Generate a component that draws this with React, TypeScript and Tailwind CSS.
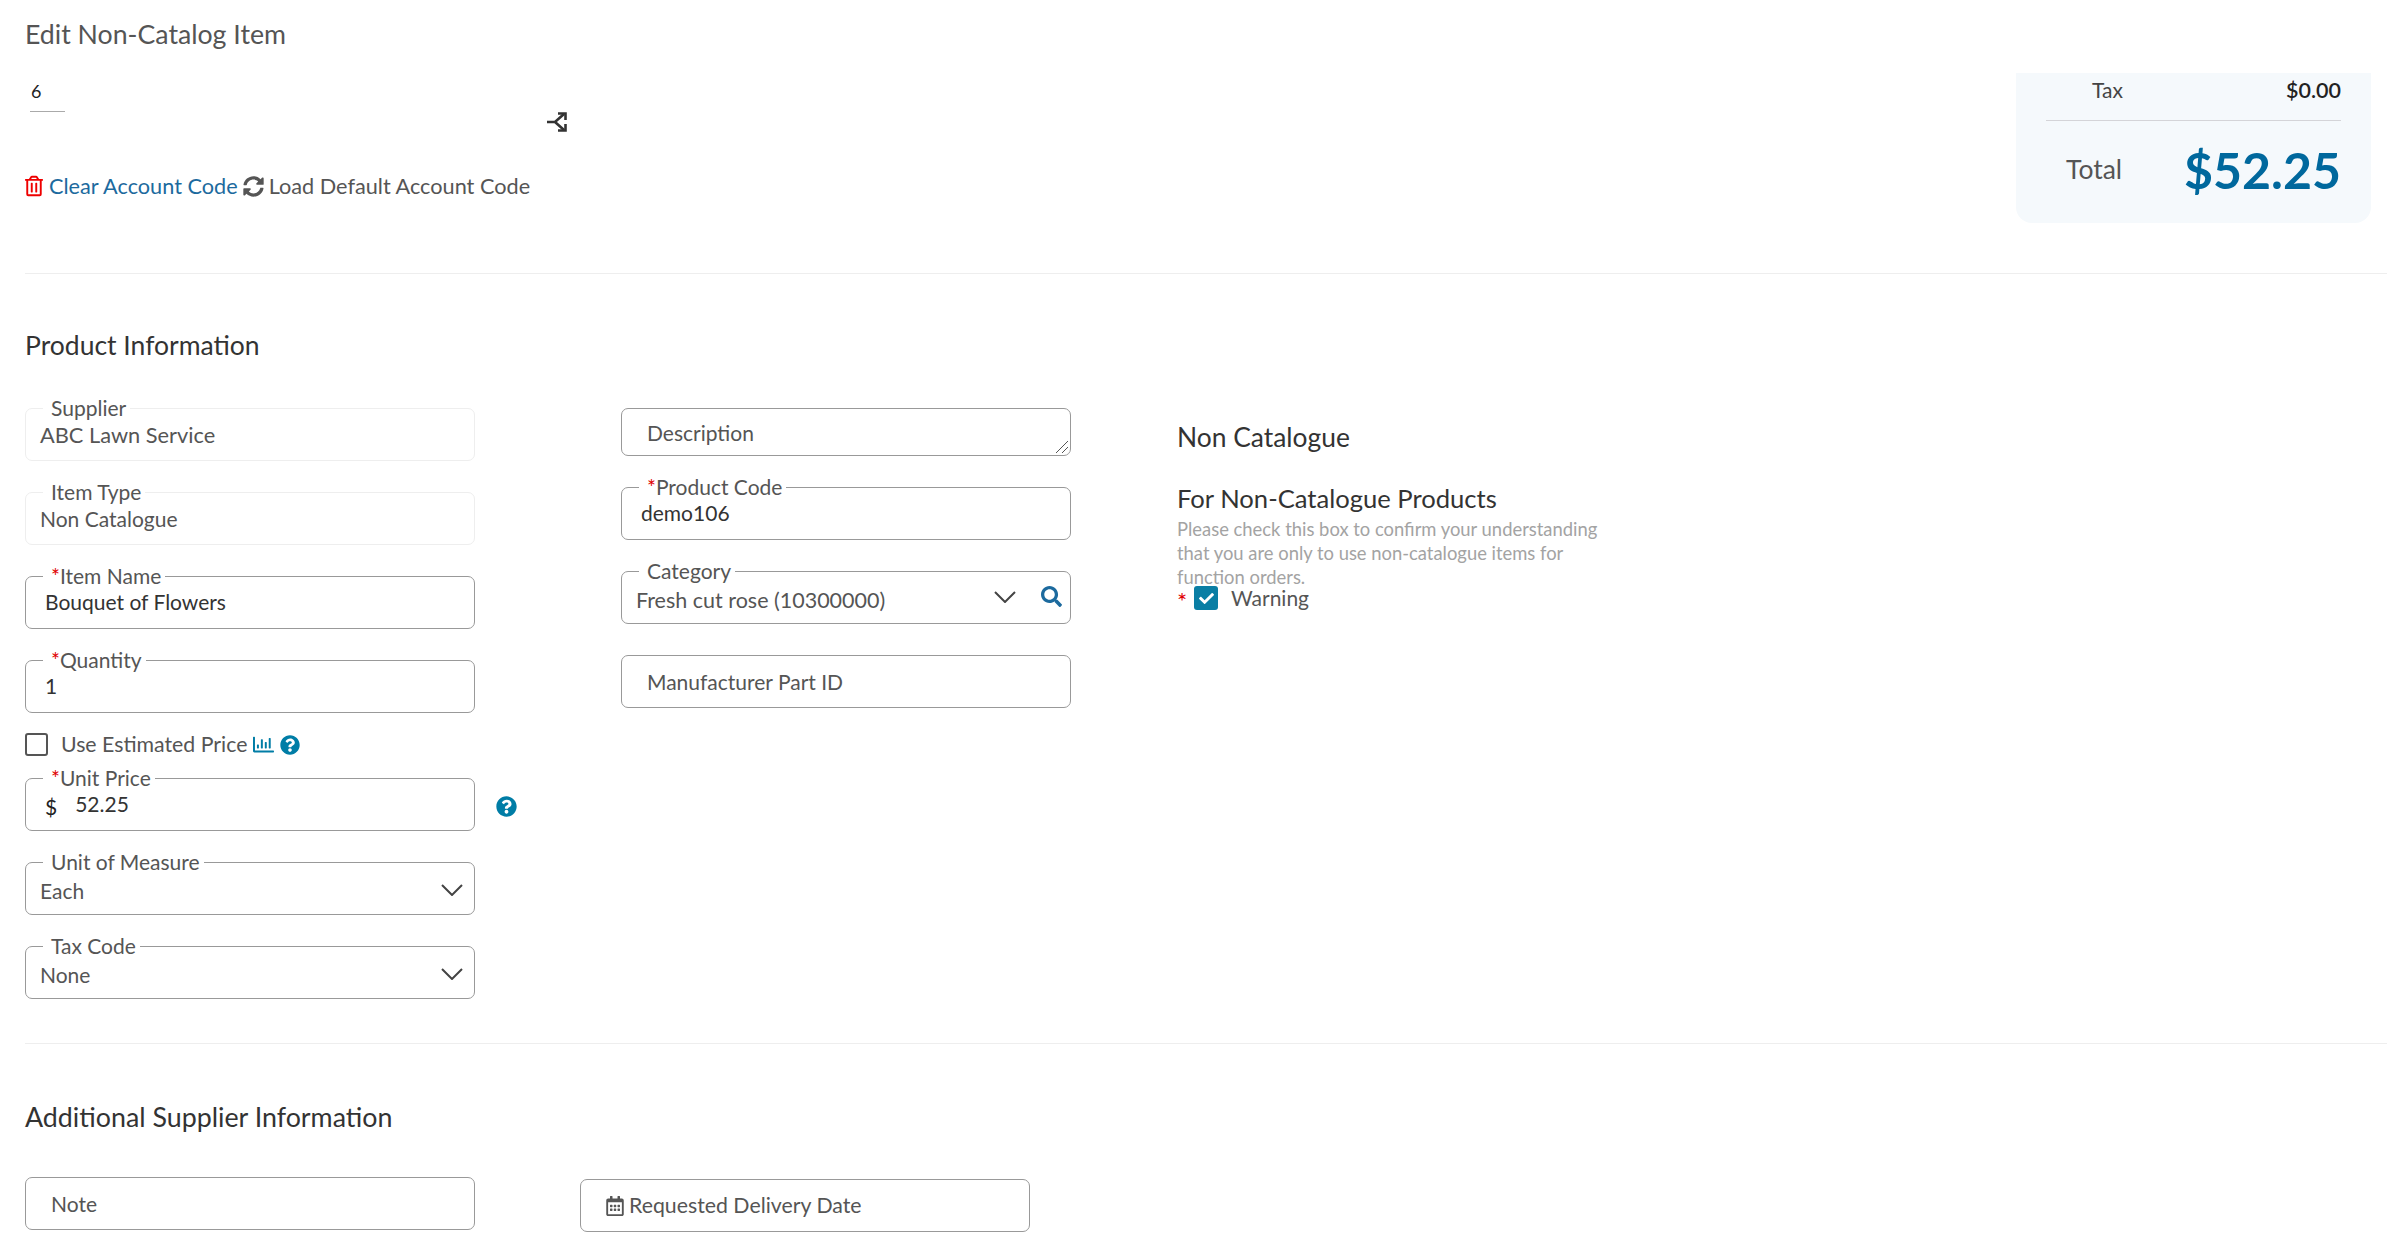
import { ReactNode } from 'react';
import {
    FaCheck,
    FaQuestionCircle,
    FaRegCalendarAlt,
    FaRegChartBar,
    FaRegTrashAlt,
    FaSearch,
    FaSyncAlt,
} from 'react-icons/fa';

function Field({ label, required, muted, children }: { label: string; required?: boolean; muted?: boolean; children: ReactNode }) {
    return (
        <fieldset className={`w-[450px] h-[65px] pb-[12px] border rounded-[7px] flex items-center leading-[28px] ${muted ? 'border-[#eeeeee]' : 'border-[#999999]'}`}>
            <legend className="ml-[17px] pl-[8px] pr-[4px] h-[24px] leading-[23px] text-[#555555]">
                {required && <span className="text-[#e00000]">*</span>}
                {label}
            </legend>
            {children}
        </fieldset>
    );
}

function Chevron() {
    return (
        <svg className="w-[22px] h-[12px] shrink-0" viewBox="0 0 22 12" fill="none" stroke="#444444" strokeWidth="2">
            <path d="M1 1l10 10L21 1" />
        </svg>
    );
}

function SelectValue({ text }: { text: string }) {
    return (
        <div className="w-full pl-[14px] pr-[11px] flex items-center justify-between text-[#555555]">
            <span className="mt-[3px]">{text}</span>
            <Chevron />
        </div>
    );
}

function PlainBox({ children }: { children: ReactNode }) {
    return <div className="w-[450px] h-[53px] border border-[#999999] rounded-[7px] flex items-center pl-[25px] text-[#555555]">{children}</div>;
}

export default function App() {
    return (
        <div className="w-[2387px] h-[1243px] overflow-hidden bg-white text-[21px] font-['Lato',sans-serif] text-[#333333]">
            <div className="pl-[25px] pt-[18px]">
                <h1 className="text-[26.7px] leading-[32px] text-[#555555]">Edit Non-Catalog Item</h1>

                {/* top row */}
                <div className="flex justify-between items-start h-[200px] mt-[23px] pr-[16px]">
                    <div className="w-[542px]">
                        <div className="ml-[5px] w-[35px] h-[39px] border-b border-[#aaaaaa] pl-[1px] pt-[6px] text-[18px] leading-[24px] text-[#222222]">6</div>
                        <div className="flex justify-end">
                            <svg className="w-[20px] h-[20px]" viewBox="0 0 20 20" fill="none" stroke="#333333" strokeWidth="2.6">
                                <path d="M0 10h8l9-8M8 10l9 8" />
                                <path d="M11 1.5h7.5V8M18.5 12v6.5H11" />
                            </svg>
                        </div>
                        <div className="flex items-center mt-[40px] leading-[28px] text-[21.7px] whitespace-nowrap">
                            <FaRegTrashAlt className="w-[18px] h-[22px] text-[#ee0000] shrink-0" />
                            <span className="ml-[6px] text-[#1c6a9e]">Clear Account Code</span>
                            <FaSyncAlt className="ml-[5px] w-[21px] h-[21px] text-[#555555] shrink-0" />
                            <span className="ml-[5px] text-[#555555]">Load Default Account Code</span>
                        </div>
                    </div>

                    <div className="w-[355px] h-[150px] bg-[#f5f9fc] rounded-b-[16px] px-[30px]">
                        <div className="flex justify-between h-[48px] pb-[13px] items-center pl-[46px] border-b border-[#d4d4d8]">
                            <span className="text-[#444444]">Tax</span>
                            <span className="text-[21.5px] font-semibold text-[#222222]">$0.00</span>
                        </div>
                        <div className="flex justify-between items-center h-[98px] pl-[20px]">
                            <span className="text-[26.5px] text-[#555555]">Total</span>
                            <span className="text-[50px] font-bold text-[#00689d]">$52.25</span>
                        </div>
                    </div>
                </div>

                <div className="border-t border-[#eeeeee]" />

                {/* product information */}
                <h2 className="mt-[55px] text-[26.5px] leading-[32px] text-[#333333]">Product Information</h2>

                <div className="flex mt-[35px]">
                    <div className="w-[596px] flex flex-col gap-[19px]">
                        <Field label="Supplier" muted>
                            <span className="pl-[14px] mt-[1px] text-[21.8px] text-[#555555]">ABC Lawn Service</span>
                        </Field>
                        <Field label="Item Type" muted>
                            <span className="pl-[14px] mt-[1px] text-[#555555]">Non Catalogue</span>
                        </Field>
                        <Field label="Item Name" required>
                            <span className="pl-[19px]">Bouquet of Flowers</span>
                        </Field>
                        <Field label="Quantity" required>
                            <span className="pl-[19px]">1</span>
                        </Field>

                        <div className="flex items-center h-[23px] mt-[1px] -mb-[9px] text-[#555555]">
                            <span className="w-[23px] h-[23px] border-2 border-[#555555] rounded-[3px]" />
                            <span className="ml-[13px] text-[21.3px]">Use Estimated Price</span>
                            <FaRegChartBar className="ml-[6px] w-[21px] h-[21px] text-[#007da6]" />
                            <FaQuestionCircle className="ml-[6px] w-[20px] h-[20px] text-[#007da6]" />
                        </div>

                        <div className="flex items-end">
                            <Field label="Unit Price" required>
                                <span className="pl-[19px] mt-[5px] text-[#222222]">$</span>
                                <span className="pl-[18px] -mt-[1px]">52.25</span>
                            </Field>
                            <FaQuestionCircle className="ml-[21px] mb-[14px] w-[21px] h-[21px] text-[#007da6]" />
                        </div>
                        <Field label="Unit of Measure">
                            <SelectValue text="Each" />
                        </Field>
                        <Field label="Tax Code">
                            <SelectValue text="None" />
                        </Field>
                    </div>

                    <div className="w-[556px] pt-[12px]">
                        <div className="relative w-[450px] h-[48px] pt-[2px] border border-[#999999] rounded-[7px] flex items-center pl-[25px] text-[#555555]">
                            Description
                            <svg className="absolute right-[1px] bottom-[1px] w-[14px] h-[14px]" viewBox="0 0 14 14" stroke="#555555" strokeWidth="1">
                                <path d="M1 13 13 1M7 13l6-6" />
                            </svg>
                        </div>
                        <div className="mt-[19px]">
                            <Field label="Product Code" required>
                                <span className="pl-[19px]">demo106</span>
                            </Field>
                        </div>
                        <div className="mt-[19px]">
                            <Field label="Category">
                                <div className="w-full pl-[14px] pr-[8px] flex items-center text-[#555555]">
                                    <span className="flex-1 mt-[5px] text-[21.5px]">Fresh cut rose (10300000)</span>
                                    <Chevron />
                                    <FaSearch className="ml-[25px] w-[21px] h-[21px] text-[#1c6a9e] -mt-[2px]" />
                                </div>
                            </Field>
                        </div>
                        <div className="mt-[31px]">
                            <PlainBox>Manufacturer Part ID</PlainBox>
                        </div>
                    </div>

                    <div className="pt-[26px] w-[440px]">
                        <h3 className="text-[26.4px] leading-[30px] text-[#333333]">Non Catalogue</h3>
                        <h3 className="mt-[31px] text-[25.6px] leading-[30px] text-[#333333]">For Non-Catalogue Products</h3>
                        <p className="mt-[4px] text-[18.4px] leading-[24px] text-[#a3a3a3]">
                            Please check this box to confirm your understanding that you are only to use non-catalogue items for function orders.
                        </p>
                        <div className="flex items-center -mt-[3px] h-[24px] leading-[18px]">
                            <span className="w-[17px] h-[18px] mt-[6px] text-[24px] leading-[18px] text-[#e00000]">*</span>
                            <span className="w-[24px] h-[24px] bg-[#0a7ea4] rounded-[3px] flex items-center justify-center">
                                <FaCheck className="w-[15px] h-[15px] text-white" />
                            </span>
                            <span className="ml-[13px] text-[#555555]">Warning</span>
                        </div>
                    </div>
                </div>

                <div className="mt-[44px] border-t border-[#eeeeee]" />

                {/* additional supplier information */}
                <h2 className="mt-[57px] text-[26.8px] leading-[32px] text-[#333333]">Additional Supplier Information</h2>

                <div className="flex items-start mt-[44px]">
                    <PlainBox>Note</PlainBox>
                    <div className="ml-[105px] mt-[2px] w-[450px] h-[53px] border border-[#999999] rounded-[7px] flex items-center pl-[25px] text-[#555555] text-[21.3px]">
                        <FaRegCalendarAlt className="w-[18px] h-[20px]" />
                        <span className="ml-[5px]">Requested Delivery Date</span>
                    </div>
                </div>
            </div>
        </div>
    );
}
